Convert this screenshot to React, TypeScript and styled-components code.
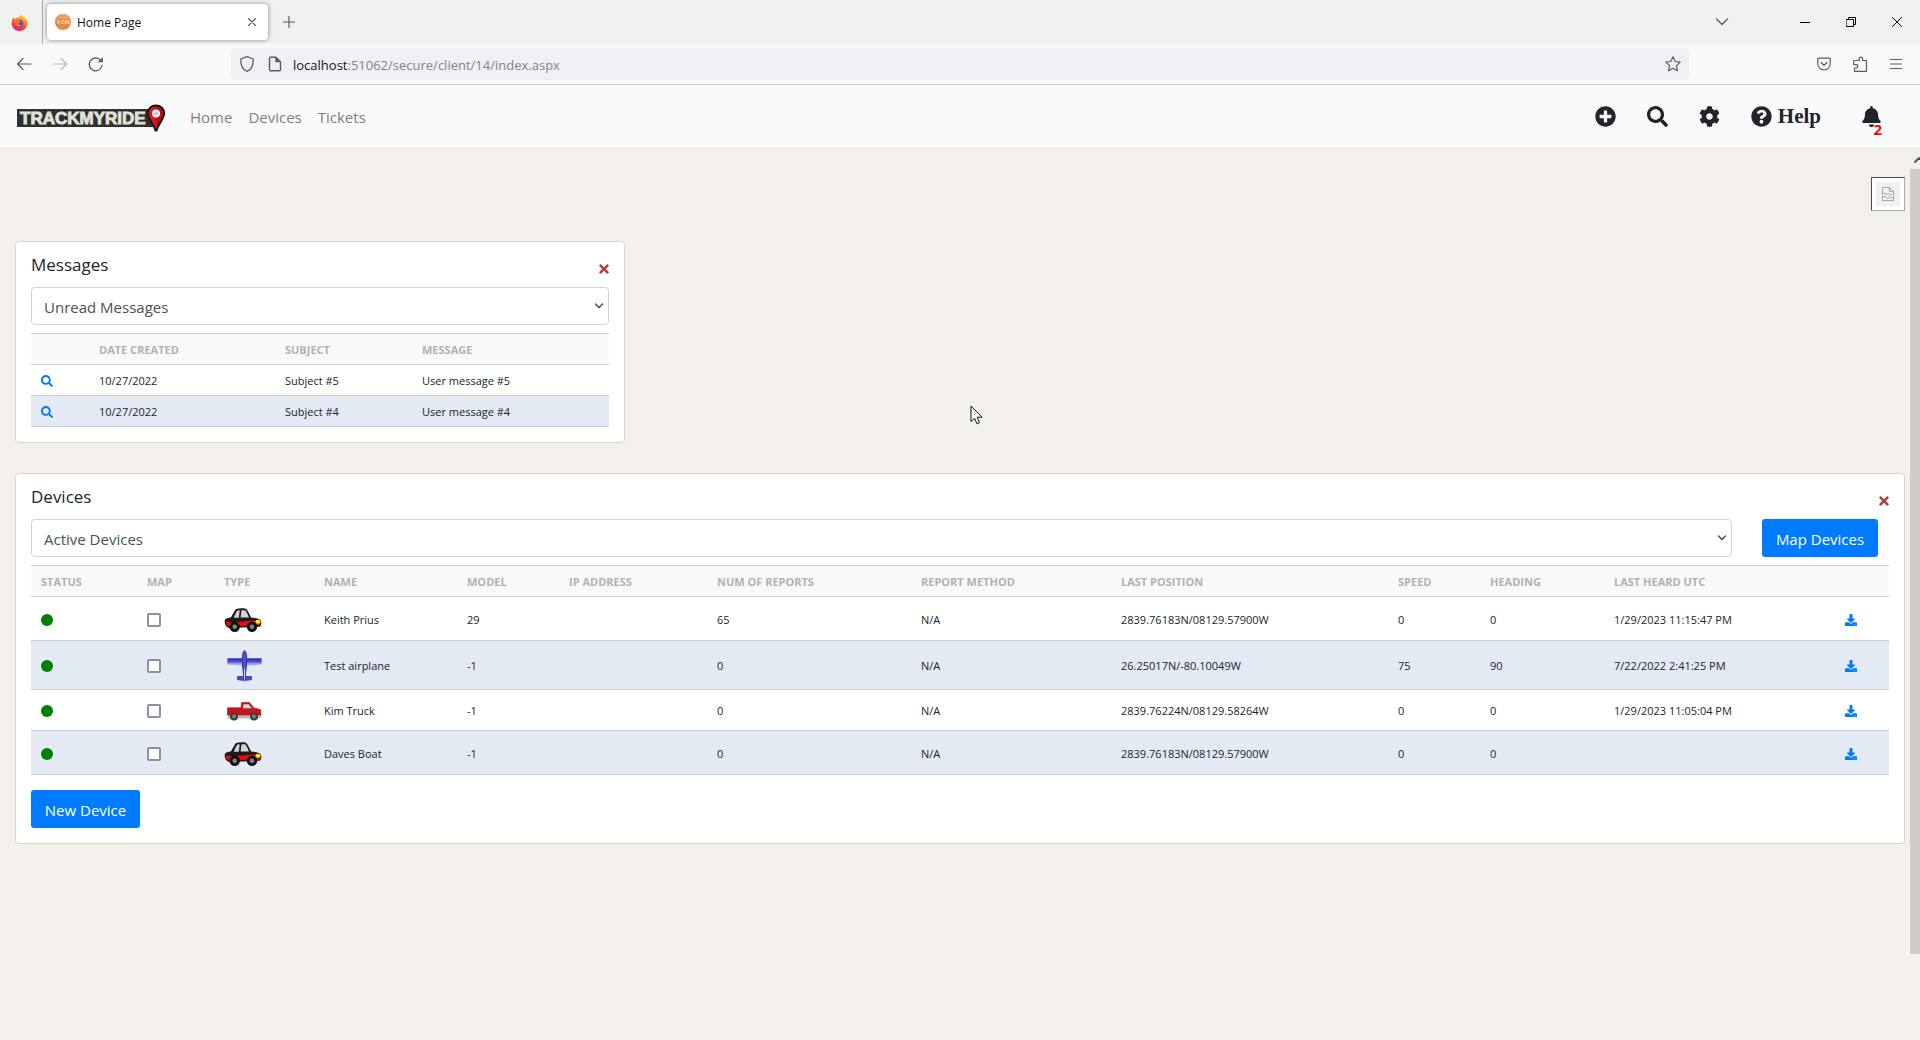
import React from "react";
import styled, { createGlobalStyle } from "styled-components";
import {
  FaPlusCircle,
  FaSearch,
  FaCog,
  FaQuestionCircle,
  FaBell,
  FaTimes,
  FaDownload,
} from "react-icons/fa";

const sans = `"Open Sans", "Noto Sans", sans-serif`;

const GlobalStyle = createGlobalStyle`
  *, *::before, *::after { box-sizing: border-box; }
  body {
    margin: 0;
    font-family: ${sans};
    font-size: 16px;
    color: #212529;
    background: #f3f0eb;
  }
  button, select, input { font-family: inherit; }
  svg { display: block; flex: none; }
`;

/* ---------- browser window ---------- */

const Window = styled.div`
  display: flex;
  flex-direction: column;
  min-height: 100vh;
`;

const TabStrip = styled.div`
  display: flex;
  align-items: center;
  height: 44px;
  background: #f0f0f0;
`;

const AppMark = styled.div`
  display: flex;
  align-items: center;
  align-self: stretch;
  width: 43px;
  padding-left: 11px;
  border-right: 1px solid #a9a9ad;
`;

const Tab = styled.div`
  display: flex;
  align-items: center;
  gap: 6px;
  width: 221px;
  height: 36px;
  margin-left: 4px;
  padding: 0 8px;
  border-radius: 4px;
  background: #fff;
  box-shadow: 0 0 4px rgba(0, 0, 0, 0.45);
  font-size: 12px;
  color: #15141a;
`;

const TabTitle = styled.span`
  flex: 1;
`;

const ChromeButton = styled.button<{ $size?: number }>`
  display: flex;
  align-items: center;
  justify-content: center;
  flex: none;
  width: ${(p) => p.$size ?? 36}px;
  height: ${(p) => p.$size ?? 36}px;
  padding: 0;
  border: 0;
  background: none;
  color: #5b5b66;

  &:disabled {
    color: #bcbcc2;
  }
`;

const WindowButtons = styled.div`
  display: flex;
  align-items: center;
  gap: 10px;
  margin-left: auto;
  padding-right: 5px;

  & > button:first-child {
    margin-right: 37px;
  }
  & > button:not(:first-child) {
    color: #000;
  }
`;

const AddressRow = styled.div`
  display: flex;
  align-items: center;
  height: 41px;
  padding: 0 6px;
  background: #f9f9fb;
  border-bottom: 1px solid #cccccf;
`;

const AddressBar = styled.div`
  display: flex;
  align-items: center;
  flex: 1;
  height: 32px;
  margin-left: 117px;
  margin-right: 117px;
  padding: 0 2px 0 8px;
  border-radius: 4px;
  background: #f0eff4;
  color: #5b5b66;
`;

const Address = styled.div`
  flex: 1;
  margin-left: 10px;
  padding-top: 2px;
  font-size: 13px;
  line-height: 20px;
  color: #84848c;

  b {
    font-weight: 400;
    color: #15141a;
  }
`;

const PageIcon = styled.span`
  margin-left: 12px;
`;

/* ---------- site navigation ---------- */

const Nav = styled.nav`
  display: flex;
  align-items: center;
  height: 62px;
  padding: 0 38px 0 17px;
  background: #f8fafc;
`;

const NavLinks = styled.div`
  display: flex;
  gap: 16px;
  margin-left: 24px;
  padding-top: 2px;

  a {
    color: #7f8082;
    font-size: 15px;
    line-height: 24px;
    text-decoration: none;
  }
`;

const Tools = styled.div`
  display: flex;
  align-items: center;
  gap: 31px;
  margin-left: auto;
`;

const ToolLink = styled.a`
  position: relative;
  display: flex;
  align-items: center;
  gap: 6px;
  color: #212529;
  font: bold 21px/24px "Liberation Serif", serif;
  text-decoration: none;

  &:last-child {
    margin-left: 9px;
  }
`;

const Badge = styled.span`
  position: absolute;
  right: 0;
  bottom: -10px;
  font: bold 15px/16px ${sans};
  color: #f00;
`;

/* ---------- page ---------- */

const Page = styled.div`
  display: flex;
  flex: 1;
  background: #f3f0eb;
`;

const Main = styled.main`
  display: flex;
  flex-direction: column;
  gap: 30px;
  flex: 1;
  min-width: 0;
  padding: 30px 5px 30px 15px;
`;

const LayoutButton = styled.button`
  display: flex;
  align-items: center;
  justify-content: center;
  align-self: flex-end;
  width: 34px;
  height: 34px;
  padding: 0;
  border: 1px solid;
  border-color: #4c4c4c #a9a9a9 #a9a9a9 #4c4c4c;
  background: #fff;

  span {
    display: flex;
    align-items: center;
    justify-content: center;
    width: 24px;
    height: 24px;
    background: #f3f0eb;
  }
`;

const Thirds = styled.div`
  display: grid;
  grid-template-columns: repeat(3, 1fr);
  gap: 30px;
`;

const Card = styled.section`
  padding: 11px 15px 15px;
  border: 1px solid #d3d3d3;
  border-radius: 4px;
  background: #fff;
`;

const CardHead = styled.div`
  display: flex;
  justify-content: space-between;
  height: 34px;
`;

const Title = styled.h2`
  margin: 0;
  font-size: 17px;
  line-height: 24px;
  font-weight: 400;
`;

const CloseButton = styled.button`
  display: flex;
  justify-content: center;
  align-self: flex-start;
  width: 10px;
  height: 14px;
  margin-top: 9px;
  padding: 0;
  border: 0;
  background: none;
  color: #a94442;
`;

const Filter = styled.div`
  display: flex;
  gap: 30px;
  margin-bottom: 8px;
`;

const SelectBox = styled.div`
  display: grid;
  flex: 1;
  align-items: center;

  & > * {
    grid-area: 1 / 1;
  }
  & > svg {
    justify-self: end;
    margin-right: 5px;
    color: #495057;
    pointer-events: none;
  }
`;

const Select = styled.select`
  appearance: none;
  width: 100%;
  height: 38px;
  padding: 2px 12px 0;
  border: 1px solid #ced4da;
  border-radius: 4px;
  background: #fff;
  color: #495057;
  font-size: 15px;
`;

const PrimaryButton = styled.button<{ $minWidth: number }>`
  min-width: ${(p) => p.$minWidth}px;
  height: 38px;
  padding: 2px 12px 0;
  border: 0;
  border-radius: 3px;
  background: #007bff;
  color: #fff;
  font-size: 15px;
`;

const MapAction = styled.div`
  padding-right: 11px;
`;

const Actions = styled.div`
  padding-top: 15px;
`;

const Table = styled.table`
  width: 100%;
  border-collapse: separate;
  border-spacing: 0;
  border-top: 1px solid #ccced0;
  font-size: 11px;
  line-height: 14px;

  th,
  td {
    padding: 9px 10px 7px;
    border-bottom: 1px solid #ccced0;
    text-align: left;
    vertical-align: middle;
    white-space: nowrap;
  }
  th {
    background: #f9f9f9;
    color: #b1b1b1;
    font-weight: 700;
  }
  tbody tr:nth-child(even) td {
    background: #e3eaf4;
  }
  a {
    display: block;
    width: 12px;
    color: #007bff;
  }
`;

const Dot = styled.span`
  display: block;
  width: 12px;
  height: 12px;
  border-radius: 50%;
  background: #008000;
`;

const Check = styled.input`
  display: block;
  appearance: none;
  width: 14px;
  height: 14px;
  margin: 0;
  border: 2px solid #8f8f9d;
  border-radius: 2px;
  background: #fff;
`;

const ScrollTrack = styled.div`
  display: flex;
  flex-direction: column;
  width: 10px;
  background: #f0f0f0;
  overflow: hidden;
`;

const ScrollArrow = styled.div`
  height: 22px;
  padding: 10px 0 0 4px;
  color: #505050;
`;

const ScrollThumb = styled.div`
  flex: 785;
  background: #cdcdcd;
`;

const ScrollRest = styled.div`
  flex: 86;
`;

const Pointer = styled.div`
  position: absolute;
  left: 970px;
  top: 405px;
`;

/* ---------- drawings ---------- */

const FirefoxMark = () => (
  <svg width="17" height="17" viewBox="0 0 17 17">
    <defs>
      <linearGradient id="ff-body" x1="0.8" y1="0" x2="0.3" y2="1">
        <stop offset="0" stopColor="#fff44f" />
        <stop offset="0.35" stopColor="#ff980e" />
        <stop offset="0.7" stopColor="#ff3647" />
        <stop offset="1" stopColor="#e31587" />
      </linearGradient>
    </defs>
    <path
      d="M8.500 17C4 17 .7 13.700.7 9.300c0-2.600 1-4.600 2.300-6 .1.800.4 1.300.8 1.700C5 3.700 7 3.500 8 3.800 8.400 2 9.400.7 10.600 0c.2 1.800 1.600 2.700 2.600 4l.3-1c1.900 1.600 3 3.700 3 6.300 0 4.400-3.500 7.700-8 7.700z"
      fill="url(#ff-body)"
    />
    <circle cx="8.600" cy="9.300" r="3.600" fill="#7542e5" />
    <path d="M2.800 6.200c1.600-1.200 4-.8 5.400.3 1 .2 1.600.5 1.600 1-.6.900-2 .8-2.400 1.700 0 1.500 1.300 2.300 3 2.100-2 2.200-6.300 1.300-6.800-2C3.300 8 2.800 7.100 2.800 6.200z" fill="#ff7a1a" />
  </svg>
);

const Favicon = () => (
  <svg width="16" height="16" viewBox="0 0 16 16">
    <circle cx="8" cy="8" r="8" fill="#e8883c" />
    <path d="M.6 5a8 8 0 0 1 14.800 0z" fill="#eea066" />
    <g fill="none" stroke="#fbe3cf" strokeWidth="1">
      <path d="M5.200 7a1.500 1.500 0 1 0 0 2.200M9 7a1.500 1.500 0 1 0 0 2.200M10.200 6.600v2.900h1v-2.900zM14.300 6.600h-1.400v1.400h1.300v1.500h-1.500" />
    </g>
  </svg>
);

type StrokeProps = { w: number; h: number; d: string; width?: number; solid?: string };
const Stroke = ({ w, h, d, width = 1, solid }: StrokeProps) => (
  <svg width={w} height={h} viewBox={`0 0 ${w} ${h}`} fill="none" stroke="currentColor" strokeWidth={width} strokeLinecap="round" strokeLinejoin="round">
    <path d={d} />
    {solid && <path d={solid} fill="currentColor" stroke="none" />}
  </svg>
);

const Logo = () => (
  <svg width="149" height="32" viewBox="0 -3 149 32" role="img" aria-label="TrackMyRide">
    <defs>
      <pattern id="mesh" width="2" height="2" patternUnits="userSpaceOnUse">
        <rect width="2" height="2" fill="#2b2c2c" />
        <rect width="1" height="1" fill="#3b3d3d" />
      </pattern>
      <linearGradient id="pin" x1="0" x2="1">
        <stop offset="0.350" stopColor="#e8141b" />
        <stop offset="0.600" stopColor="#b80d12" />
      </linearGradient>
    </defs>
    <rect x="0" y="6" width="136" height="18" fill="url(#mesh)" />
    <text x="3" y="21" fontFamily='"Liberation Sans", Arial, sans-serif' fontWeight="700" fontSize="17" fill="#e2e2d8" stroke="#e2e2d8" strokeWidth="0.900">
      TRACKMYRIDE
    </text>
    <path d="M139 2.500c4.700 0 8.200 3.300 8.200 7.800 0 5-5 9.200-7.700 17.200h-1c-2.700-8-7.700-12.200-7.700-17.200 0-4.500 3.500-7.800 8.200-7.800z" fill="url(#pin)" stroke="#191919" strokeWidth="2" />
    <circle cx="139" cy="10.500" r="4" fill="#fff" />
    <path d="M136.800 9.400v1.300c0 .9 1.600.9 1.600 0V9.400m2.600 0h-1c-.8 0-.8 1 0 1s.8 1 0 1h-1" fill="none" stroke="#e0565a" strokeWidth="0.600" />
  </svg>
);

const CarIcon = () => (
  <svg width="38" height="27" viewBox="0 0 38 27">
    <path d="M1 13.500C2 12.300 5 11.800 7 11.300 9 8 10.500 4.500 12 3c3.500-.8 7-.8 10-.2 2 2.200 3.600 5.500 5 8.700 4 .3 8.500 1.200 9.700 2.800 1 2 .8 4.700-.8 6.500L5 22C1.500 20.800 0 17 1 13.500z" fill="#211a1e" />
    <path d="M9.800 11.700c1.200-3 2.400-5.800 3.700-7.100l2.300-.3-1 7.400zM17.500 4.200h3.600c1.600 2 2.900 4.500 3.800 7.400h-8.300z" fill="#d2d2d4" />
    <path d="M2 15.500c5 .8 9 .6 13 .3 6-.4 11-1 15-1.300 2.500.2 5 .6 6 1.500.5 1.300.3 2.600-.4 3.500L4 20.200c-1.500-1-2.200-3-2-4.700z" fill="#f00a0a" />
    <ellipse cx="34" cy="15.700" rx="2.600" ry="2" fill="#fbf20a" />
    <circle cx="10.700" cy="20.700" r="5.200" fill="#111" />
    <circle cx="10.700" cy="20.700" r="2.300" fill="#858585" />
    <circle cx="28" cy="20.700" r="5.200" fill="#111" />
    <circle cx="28" cy="20.700" r="2.300" fill="#858585" />
  </svg>
);

const PlaneIcon = () => (
  <svg width="38" height="32" viewBox="0 0 38 32">
    <defs>
      <linearGradient id="wing" x1="0" y1="0" x2="0" y2="1">
        <stop offset="0" stopColor="#3a3ae0" />
        <stop offset="0.400" stopColor="#3d3dda" />
        <stop offset="1" stopColor="#d6d8f4" />
      </linearGradient>
    </defs>
    <path d="M3.500 8.500h34v5.500l-15 1.200h-4l-15-1.200z" fill="url(#wing)" stroke="#8f93bd" strokeWidth="0.700" />
    <path d="M3.500 9h34" stroke="#3030a8" />
    <path d="M13.500 26.500h14v3.200l-5 .6h-4l-5-.6z" fill="#4a4add" stroke="#363a70" strokeWidth="0.800" />
    <path d="M20.500.500c1.600 1.500 2.200 4 2.200 7 0 6-.6 13-1.500 19v4.500h-1.400v-4.500c-.9-6-1.500-13-1.500-19 0-3 .6-5.500 2.200-7z" fill="#4c4cd8" stroke="#333869" strokeWidth="0.900" />
    <path d="M20.500 18v13" stroke="#c6c9ea" />
  </svg>
);

const TruckIcon = () => (
  <svg width="38" height="24" viewBox="0 0 38 24">
    <path d="M3 15.500l34 0 .5 2.500-2.500 1.500H4z" fill="#b9b9b9" />
    <path d="M3.500 8.800H17l.5-5.300h8l4.500 5.500 6.500 1.600.5 5.400H3.500z" fill="#c41818" stroke="#a01010" strokeWidth="0.600" />
    <path d="M19.500 5.200h5.200l3 4h-8.700z" fill="#dadada" />
    <circle cx="10" cy="17.500" r="4" fill="#3d3d3d" />
    <circle cx="10" cy="17.500" r="2" fill="#808080" />
    <circle cx="30" cy="17.500" r="4" fill="#3d3d3d" />
    <circle cx="30" cy="17.500" r="2" fill="#808080" />
  </svg>
);

const vehicles = { car: CarIcon, plane: PlaneIcon, truck: TruckIcon };

/* ---------- data ---------- */

const messages = [
  { date: "10/27/2022", subject: "Subject #5", text: "User message #5" },
  { date: "10/27/2022", subject: "Subject #4", text: "User message #4" },
];

const messageColumns: [string, number][] = [
  ["", 58],
  ["DATE CREATED", 186],
  ["SUBJECT", 137],
  ["MESSAGE", 197],
];

const deviceColumns: [string, number][] = [
  ["STATUS", 106],
  ["MAP", 77],
  ["TYPE", 100],
  ["NAME", 143],
  ["MODEL", 102],
  ["IP ADDRESS", 148],
  ["NUM OF REPORTS", 204],
  ["REPORT METHOD", 200],
  ["LAST POSITION", 277],
  ["SPEED", 92],
  ["HEADING", 124],
  ["LAST HEARD UTC", 231],
  ["", 54],
];

type Device = {
  type: keyof typeof vehicles;
  name: string;
  values: string[];
};

const devices: Device[] = [
  { type: "car", name: "Keith Prius", values: ["29", "", "65", "N/A", "2839.76183N/08129.57900W", "0", "0", "1/29/2023 11:15:47 PM"] },
  { type: "plane", name: "Test airplane", values: ["-1", "", "0", "N/A", "26.25017N/-80.10049W", "75", "90", "7/22/2022 2:41:25 PM"] },
  { type: "truck", name: "Kim Truck", values: ["-1", "", "0", "N/A", "2839.76224N/08129.58264W", "0", "0", "1/29/2023 11:05:04 PM"] },
  { type: "car", name: "Daves Boat", values: ["-1", "", "0", "N/A", "2839.76183N/08129.57900W", "0", "0", ""] },
];

/* ---------- parts ---------- */

const TableHead = ({ columns }: { columns: [string, number][] }) => (
  <>
    <colgroup>
      {columns.map(([label, width], i) => (
        <col key={label + i} width={width} />
      ))}
    </colgroup>
    <thead>
      <tr>
        {columns.map(([label], i) => (
          <th key={label + i} scope="col">
            {label}
          </th>
        ))}
      </tr>
    </thead>
  </>
);

const FilterSelect = ({ label, option }: { label: string; option: string }) => (
  <SelectBox>
    <Select aria-label={label}>
      <option>{option}</option>
    </Select>
    <Stroke w={10} h={8} d="M1.500 2l3.500 3.500L8.500 2" width={1.500} />
  </SelectBox>
);

const CardHeader = ({ title }: { title: string }) => (
  <CardHead>
    <Title>{title}</Title>
    <CloseButton aria-label={`Close ${title}`}>
      <FaTimes size={14} />
    </CloseButton>
  </CardHead>
);

const BrowserChrome = () => (
  <header>
    <TabStrip>
      <AppMark>
        <FirefoxMark />
      </AppMark>
      <Tab>
        <Favicon />
        <TabTitle>Home Page</TabTitle>
        <ChromeButton $size={16} aria-label="Close tab">
          <Stroke w={10} h={10} d="M1.500 1.500l7 7M8.500 1.500l-7 7" width={1.100} />
        </ChromeButton>
      </Tab>
      <ChromeButton $size={42} aria-label="New tab">
        <Stroke w={12} h={12} d="M6 .5v11M.5 6h11" width={1.200} />
      </ChromeButton>
      <WindowButtons>
        <ChromeButton aria-label="List all tabs">
          <Stroke w={14} h={8} d="M1.500 1l5.500 5.500L12.500 1" width={1.300} />
        </ChromeButton>
        <ChromeButton aria-label="Minimize">
          <Stroke w={10} h={1} d="M0 .5h10" />
        </ChromeButton>
        <ChromeButton aria-label="Restore">
          <Stroke w={10} h={10} d="M.5 2.500h7v7h-7zM2.500 2.500v-2h7v7h-2" />
        </ChromeButton>
        <ChromeButton aria-label="Close window">
          <Stroke w={10} h={10} d="M.5 .5l9 9M9.500 .5l-9 9" />
        </ChromeButton>
      </WindowButtons>
    </TabStrip>
    <AddressRow>
      <ChromeButton aria-label="Back">
        <Stroke w={16} h={14} d="M15 7H1.500M7 1.500L1.500 7 7 12.500" width={1.200} />
      </ChromeButton>
      <ChromeButton aria-label="Forward" disabled>
        <Stroke w={16} h={14} d="M1 7h13.500M9 1.500L14.500 7 9 12.500" width={1.200} />
      </ChromeButton>
      <ChromeButton aria-label="Reload">
        <Stroke w={16} h={16} d="M14 9.500A6.400 6.400 0 1 1 12.300 3.900" width={1.300} solid="M14.900 1v5.300H9.600z" />
      </ChromeButton>
      <AddressBar>
        <Stroke w={16} h={16} d="M8 .7l6.200 2.300c.3 6-1.700 10.500-6.200 12.400C3.500 13.500 1.500 9 1.800 3z" width={1.300} />
        <PageIcon>
          <Stroke w={16} h={16} d="M2.500 2.500a1.200 1.200 0 0 1 1.200-1.200H9l4.500 4.500v7.700a1.200 1.200 0 0 1-1.200 1.200H3.700a1.200 1.200 0 0 1-1.200-1.200z" width={1.400} solid="M8.300 1l5.500 5.300H8.300z" />
        </PageIcon>
        <Address>
          <b>localhost</b>:51062/secure/client/14/index.aspx
        </Address>
        <ChromeButton $size={28} aria-label="Bookmark this page">
          <Stroke w={16} h={16} d="M8 .8l2.200 4.700 5 .6-3.700 3.500 1 5.200L8 12.300 3.500 14.800l1-5.200L.8 6.100l5-.6z" width={1.200} />
        </ChromeButton>
      </AddressBar>
      <ChromeButton aria-label="Save to Pocket">
        <Stroke w={14} h={14} d="M2 1.200h10a1.400 1.400 0 0 1 1.300 1.400V6c0 9-12.600 9-12.600 0V2.600A1.400 1.400 0 0 1 2 1.200zM4 5.500l3 2.800 3-2.800" width={1.200} />
      </ChromeButton>
      <ChromeButton aria-label="Extensions">
        <Stroke w={16} h={16} d="M5 4.500h2.200V2.800a1.700 1.700 0 0 1 3.400 0v1.700h3.900v10.800H2.500V12h1.700a1.700 1.700 0 0 0 0-3.400H1.700V5.500a1 1 0 0 1 1-1z" width={1.200} />
      </ChromeButton>
      <ChromeButton aria-label="Menu">
        <Stroke w={12} h={12} d="M.5 1.500h11M.5 6h11M.5 10.500h11" width={1.200} />
      </ChromeButton>
    </AddressRow>
  </header>
);

const SiteNav = () => (
  <Nav>
    <Logo />
    <NavLinks>
      <a href="#home">Home</a>
      <a href="#devices">Devices</a>
      <a href="#tickets">Tickets</a>
    </NavLinks>
    <Tools>
      <ToolLink href="#add" aria-label="Add">
        <FaPlusCircle size={21} />
      </ToolLink>
      <ToolLink href="#search" aria-label="Search">
        <FaSearch size={21} />
      </ToolLink>
      <ToolLink href="#settings" aria-label="Settings">
        <FaCog size={21} />
      </ToolLink>
      <ToolLink href="#help">
        <FaQuestionCircle size={21} />
        Help
      </ToolLink>
      <ToolLink href="#alerts">
        <FaBell size={21} />
        <Badge>2</Badge>
      </ToolLink>
    </Tools>
  </Nav>
);

export default function App() {
  return (
    <Window>
      <GlobalStyle />
      <BrowserChrome />
      <SiteNav />
      <Page>
        <Main>
          <LayoutButton aria-label="Save layout">
            <span>
              <svg width="12" height="14" viewBox="0 0 12 14" fill="none" stroke="#a8a8a8">
                <path d="M.5 8V.5h7l4 4V8M7.500.5v4h4M.5 7.500l2-2 2 2.500 2-2 2 2.500 3-2M.5 9.500v4h11v-4l-2 2-2-2-2 2-2.500-2z" />
              </svg>
            </span>
          </LayoutButton>

          <Thirds>
            <Card>
              <CardHeader title="Messages" />
              <Filter>
                <FilterSelect label="Message filter" option="Unread Messages" />
              </Filter>
              <Table>
                <TableHead columns={messageColumns} />
                <tbody>
                  {messages.map((m) => (
                    <tr key={m.subject}>
                      <td>
                        <a href="#message" aria-label={`Open ${m.subject}`}>
                          <FaSearch size={12} />
                        </a>
                      </td>
                      <td>{m.date}</td>
                      <td>{m.subject}</td>
                      <td>{m.text}</td>
                    </tr>
                  ))}
                </tbody>
              </Table>
            </Card>
          </Thirds>

          <Card>
            <CardHeader title="Devices" />
            <Filter>
              <FilterSelect label="Device filter" option="Active Devices" />
              <MapAction>
                <PrimaryButton $minWidth={116}>Map Devices</PrimaryButton>
              </MapAction>
            </Filter>
            <Table>
              <TableHead columns={deviceColumns} />
              <tbody>
                {devices.map((d) => {
                  const Vehicle = vehicles[d.type];
                  return (
                    <tr key={d.name}>
                      <td>
                        <Dot />
                      </td>
                      <td>
                        <Check type="checkbox" aria-label={`Map ${d.name}`} />
                      </td>
                      <td>
                        <Vehicle />
                      </td>
                      <td>{d.name}</td>
                      {d.values.map((v, i) => (
                        <td key={i}>{v}</td>
                      ))}
                      <td>
                        <a href="#download" aria-label={`Download ${d.name}`}>
                          <FaDownload size={12} />
                        </a>
                      </td>
                    </tr>
                  );
                })}
              </tbody>
            </Table>
            <Actions>
              <PrimaryButton $minWidth={109}>New Device</PrimaryButton>
            </Actions>
          </Card>
        </Main>
        <ScrollTrack>
          <ScrollArrow>
            <Stroke w={10} h={6} d="M1 5l4-4 4 4" width={1.800} />
          </ScrollArrow>
          <ScrollThumb />
          <ScrollRest />
        </ScrollTrack>
      </Page>
      <Pointer>
        <svg width="13" height="20" viewBox="0 0 13 20">
          <path d="M1 1v15.500l3.600-3.300 2.400 5.600 2.500-1.100-2.400-5.500H12z" fill="#fff" stroke="#111" strokeLinejoin="round" />
        </svg>
      </Pointer>
    </Window>
  );
}
